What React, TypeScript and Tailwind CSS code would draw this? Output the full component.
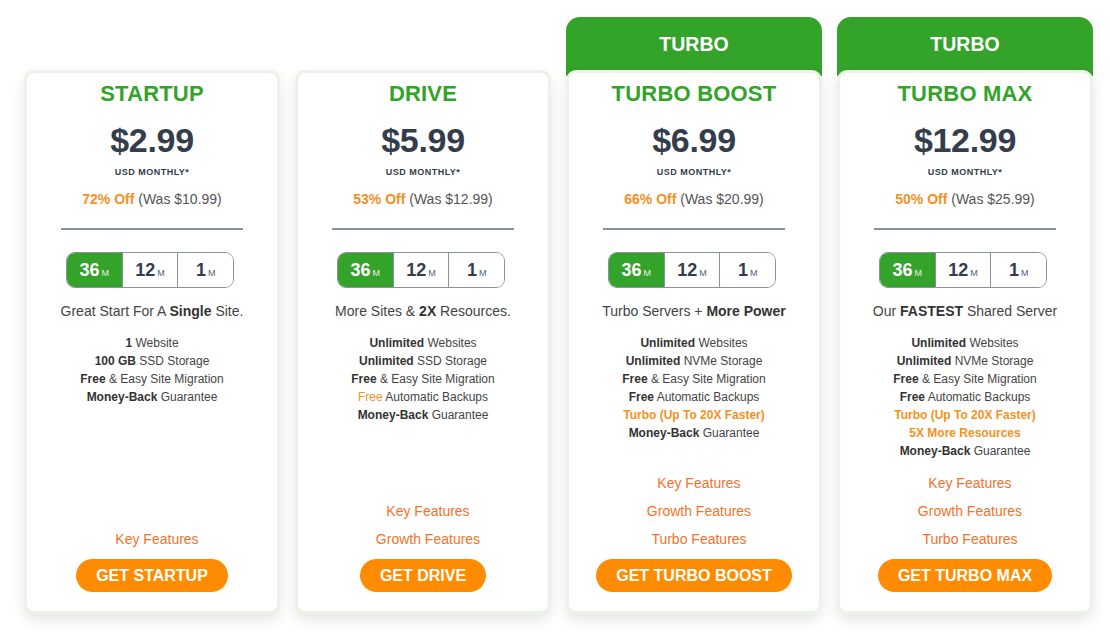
import React from "react";

type Part = { t: string; b?: boolean; o?: boolean };

type Plan = {
  name: string;
  price: string;
  off: string;
  was: string;
  turbo: boolean;
  tagline: React.ReactNode;
  features: Part[][];
  links: string[];
  button: string;
};

const plans: Plan[] = [
  {
    name: "STARTUP",
    price: "$2.99",
    off: "72% Off",
    was: "(Was $10.99)",
    turbo: false,
    tagline: (
      <>
        Great Start For A <b className="font-bold text-[#333]">Single</b> Site.
      </>
    ),
    features: [
      [{ t: "1", b: true }, { t: " Website" }],
      [{ t: "100 GB", b: true }, { t: " SSD Storage" }],
      [{ t: "Free", b: true }, { t: " & Easy Site Migration" }],
      [{ t: "Money-Back", b: true }, { t: " Guarantee" }],
    ],
    links: ["Key Features"],
    button: "GET STARTUP",
  },
  {
    name: "DRIVE",
    price: "$5.99",
    off: "53% Off",
    was: "(Was $12.99)",
    turbo: false,
    tagline: (
      <>
        More Sites &amp; <b className="font-bold text-[#333]">2X</b> Resources.
      </>
    ),
    features: [
      [{ t: "Unlimited", b: true }, { t: " Websites" }],
      [{ t: "Unlimited", b: true }, { t: " SSD Storage" }],
      [{ t: "Free", b: true }, { t: " & Easy Site Migration" }],
      [{ t: "Free", o: true }, { t: " Automatic Backups" }],
      [{ t: "Money-Back", b: true }, { t: " Guarantee" }],
    ],
    links: ["Key Features", "Growth Features"],
    button: "GET DRIVE",
  },
  {
    name: "TURBO BOOST",
    price: "$6.99",
    off: "66% Off",
    was: "(Was $20.99)",
    turbo: true,
    tagline: (
      <>
        Turbo Servers + <b className="font-bold text-[#333]">More Power</b>
      </>
    ),
    features: [
      [{ t: "Unlimited", b: true }, { t: " Websites" }],
      [{ t: "Unlimited", b: true }, { t: " NVMe Storage" }],
      [{ t: "Free", b: true }, { t: " & Easy Site Migration" }],
      [{ t: "Free", b: true }, { t: " Automatic Backups" }],
      [{ t: "Turbo (Up To 20X Faster)", o: true }],
      [{ t: "Money-Back", b: true }, { t: " Guarantee" }],
    ],
    links: ["Key Features", "Growth Features", "Turbo Features"],
    button: "GET TURBO BOOST",
  },
  {
    name: "TURBO MAX",
    price: "$12.99",
    off: "50% Off",
    was: "(Was $25.99)",
    turbo: true,
    tagline: (
      <>
        Our <b className="font-bold text-[#333]">FASTEST</b> Shared Server
      </>
    ),
    features: [
      [{ t: "Unlimited", b: true }, { t: " Websites" }],
      [{ t: "Unlimited", b: true }, { t: " NVMe Storage" }],
      [{ t: "Free", b: true }, { t: " & Easy Site Migration" }],
      [{ t: "Free", b: true }, { t: " Automatic Backups" }],
      [{ t: "Turbo (Up To 20X Faster)", o: true }],
      [{ t: "5X More Resources", o: true }],
      [{ t: "Money-Back", b: true }, { t: " Guarantee" }],
    ],
    links: ["Key Features", "Growth Features", "Turbo Features"],
    button: "GET TURBO MAX",
  },
];

function Toggle() {
  const items = [
    { n: "36", active: true },
    { n: "12", active: false },
    { n: "1", active: false },
  ];
  return (
    <div className="flex h-[36px] w-[168px] overflow-hidden rounded-[9px] border-[1.5px] border-[#8a929b]">
      {items.map((it, i) => (
        <div
          key={it.n}
          className={
            "flex flex-1 items-baseline justify-center pt-[6px] " +
            (i > 0 ? "border-l-[1.5px] border-[#8a929b] " : "") +
            (it.active ? "bg-[#34a32a] text-white" : "bg-white text-[#333d4b]")
          }
        >
          <span className="text-[18px] font-bold leading-[22px]">{it.n}</span>
          <span
            className={
              "ml-[2px] text-[9px] leading-[10px] " +
              (it.active ? "text-[#e6f2e4]" : "text-[#4d6075]")
            }
          >
            M
          </span>
        </div>
      ))}
    </div>
  );
}

function Card({ p }: { p: Plan }) {
  return (
    <div className="flex w-[256px] flex-col">
      {p.turbo ? (
        <div className="-mb-[6px] flex h-[59px] items-start justify-center rounded-t-[14px] bg-[#34a32a] pt-[16px]">
          <span className="text-[19.5px] font-bold leading-[22px] text-white">TURBO</span>
        </div>
      ) : (
        <div className="h-[53px]" />
      )}
      <div className="relative flex h-[544px] flex-col rounded-[10px] border-[3px] border-[#eaf3e5] bg-white px-[8px] pb-[19px] pt-[8px] text-center shadow-[0_6px_14px_rgba(0,0,0,0.1)]">
        <div className="text-[22px] font-bold leading-[26px] tracking-[0.2px] text-[#34a32a]">{p.name}</div>
        <div className="mt-[13px] text-[34px] font-bold leading-[40px] tracking-[-0.3px] text-[#333d4b]">
          {p.price}
        </div>
        <div className="mt-[6px] text-[9px] font-bold leading-[12px] tracking-[0.5px] text-[#333d4b]">
          USD MONTHLY*
        </div>
        <div className="mt-[11px] text-[14px] leading-[20px] text-[#555]">
          <span className="font-bold text-[#f7901e]">{p.off}</span> {p.was}
        </div>
        <div className="mx-auto mt-[19px] h-[2px] w-[182px] bg-[#8a939c]" />
        <div className="mt-[22px] flex justify-center pr-[4px]">
          <Toggle />
        </div>
        <div className="mt-[13px] text-[14px] leading-[20px] text-[#444]">{p.tagline}</div>
        <div className="mt-[13px] flex flex-col text-[12px] leading-[18px] text-[#444]">
          {p.features.map((f, i) => (
            <div key={i}>
              {f.map((part, j) => (
                <span
                  key={j}
                  className={
                    part.o
                      ? part.t === "Free"
                        ? "text-[#f7901e]"
                        : "font-bold text-[#f7901e]"
                      : part.b
                      ? "font-bold text-[#333]"
                      : ""
                  }
                >
                  {part.t}
                </span>
              ))}
            </div>
          ))}
        </div>
        <div className="mt-auto flex flex-col gap-[8px] pl-[10px]">
          {p.links.map((l) => (
            <div key={l} className="text-[14px] leading-[20px] text-[#f4722b]">
              {l}
            </div>
          ))}
        </div>
        <div className="mt-[10px] flex justify-center">
          <div className="flex h-[33px] items-center rounded-full bg-[#ff8c00] px-[20px] text-[16px] font-bold text-white">
            {p.button}
          </div>
        </div>
      </div>
    </div>
  );
}

export default function App() {
  return (
    <div
      className="h-[638px] w-[1110px] bg-white pl-[24px] pt-[17px]"
      style={{ fontFamily: '"Liberation Sans", Arial, sans-serif' }}
    >
      <div className="flex items-start gap-[15px]">
        {plans.map((p) => (
          <Card key={p.name} p={p} />
        ))}
      </div>
    </div>
  );
}
